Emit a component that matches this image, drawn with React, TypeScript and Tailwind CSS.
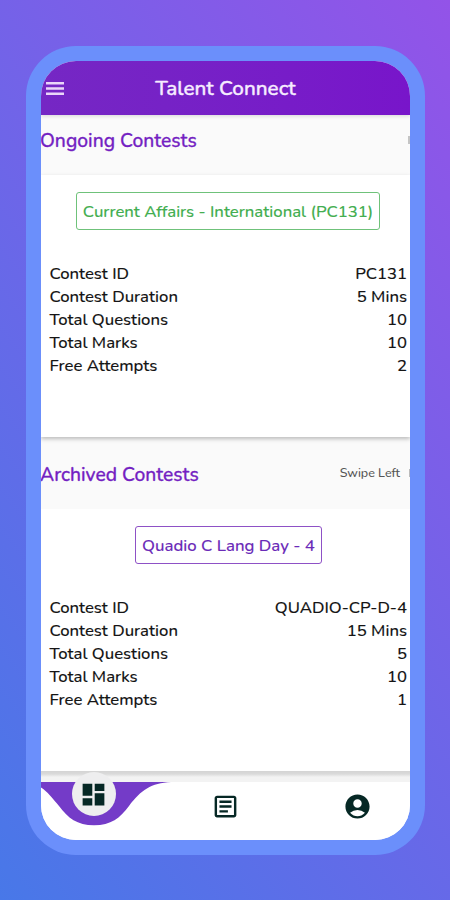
import {
	MdAccountCircle,
	MdDashboard,
	MdOutlineArticle,
} from "react-icons/md";

type Contest = {
	rows: [string, string][];
};

const ongoing: Contest = {
	rows: [
		["Contest ID", "PC131"],
		["Contest Duration", "5 Mins"],
		["Total Questions", "10"],
		["Total Marks", "10"],
		["Free Attempts", "2"],
	],
};

const archived: Contest = {
	rows: [
		["Contest ID", "QUADIO-CP-D-4"],
		["Contest Duration", "15 Mins"],
		["Total Questions", "5"],
		["Total Marks", "10"],
		["Free Attempts", "1"],
	],
};

function ContestRows({ contest }: { contest: Contest }) {
	return (
		<dl className="mt-8 pl-[8.5px] pr-[3px] text-[16.7px] leading-[23.1px] text-[#151515]">
			{contest.rows.map(([label, value]) => (
				<div key={label} className="flex justify-between">
					<dt>{label}</dt>
					<dd>{value}</dd>
				</div>
			))}
		</dl>
	);
}

export default function App() {
	return (
		<div className="h-[900px] w-[450px] overflow-hidden bg-linear-[233deg] from-[#9353e8] to-[#4878e8] pl-[26px] pt-[46px] font-['Nunito','Lato',sans-serif] font-medium [-webkit-text-stroke:0.12px_currentColor]">
			<div className="h-[809px] w-[399px] rounded-[50px] bg-[#6b8ffb] p-[15px]">
				<div className="flex h-[779px] w-[369px] flex-col overflow-hidden rounded-[35px] bg-[#fafafa]">
					<header className="relative flex h-[54px] shrink-0 items-center bg-linear-to-r from-[#7527c4] to-[#7815ca] text-[#f6ecff] shadow-[0_1px_4px_rgba(0,0,0,0.15)]">
						<svg className="ml-[5px]" width="18" height="13" viewBox="0 0 18 13">
							<path
								d="M0 1.200H18M0 6.500H18M0 11.800H18"
								stroke="#ead6f8"
								strokeWidth="2.400"
							/>
						</svg>
						<h1 className="flex-1 pr-[23px] pt-px text-center text-[20.7px] font-medium [-webkit-text-stroke:0.4px_currentColor]">
							Talent Connect
						</h1>
					</header>

					<div className="flex h-[60px] shrink-0 items-start justify-between pt-[13px]">
						<h2 className="-ml-px text-[19.3px] leading-[26px] text-[#741fc2] [-webkit-text-stroke:0.3px_currentColor]">
							Ongoing Contests
						</h2>
						<span className="mt-2 h-2 w-[2px] bg-[#c4c4c4]" />
					</div>
					<section className="h-[262px] shrink-0 bg-white pt-[17px] shadow-[0_2px_4px_rgba(0,0,0,0.25)]">
						<div className="ml-[35px] flex h-[38px] w-[304px] items-center justify-center whitespace-nowrap rounded-[3px] border-[1.5px] border-[#6fc27a] pt-px text-[16.7px] text-[#43ae50]">
							Current Affairs - International (PC131)
						</div>
						<ContestRows contest={ongoing} />
					</section>

					<div className="flex h-[72px] shrink-0 items-start justify-between pt-[25px]">
						<h2 className="-ml-px text-[19.3px] leading-[26px] text-[#741fc2] [-webkit-text-stroke:0.3px_currentColor]">
							Archived Contests
						</h2>
						<div className="flex items-center pt-[2px]">
							<span className="text-[12.5px] leading-[18px] text-[#555] [-webkit-text-stroke:0]">
								Swipe Left
							</span>
							<span className="ml-[9px] h-2 w-px bg-[#bbb]" />
						</div>
					</div>
					<section className="h-[262px] shrink-0 bg-white pt-[17px]">
						<div className="ml-[94px] flex h-[38px] w-[187px] items-center justify-center whitespace-nowrap rounded-[3px] border-[1.5px] border-[#8e51c6] pt-px text-[16.8px] text-[#6b2bb8]">
							Quadio C Lang Day - 4
						</div>
						<ContestRows contest={archived} />
					</section>

					{/* card shadow fading out above the tab bar */}
					<div className="h-[11px] shrink-0 bg-[linear-gradient(#d4d4d4_0,#dadada_3px,#f3f3f3_6px)]" />
					<nav className="relative h-[58px] shrink-0 bg-white text-[#062825]">
						{/* dip under the active tab */}
						<svg
							className="absolute left-0 top-0"
							width="135"
							height="45"
							viewBox="0 0 135 45"
						>
							<path
								d="M0 0H130C110 1 100 8 88 24C79 36 70 43.300 53 43.300C36 43.300 27 36 18 24C12 17 6 9 0 5.500Z"
								fill="#743bc8"
							/>
						</svg>
						<div className="relative -mx-[13px] grid h-[49px] grid-cols-3 items-center justify-items-center">
							<div className="-mt-[25px] flex size-11 items-center justify-center rounded-full bg-[#eeeeef]">
								<MdDashboard className="size-[29px]" />
							</div>
							<MdOutlineArticle className="size-[29px]" />
							<MdAccountCircle className="size-[29px]" />
						</div>
					</nav>
				</div>
			</div>
		</div>
	);
}
